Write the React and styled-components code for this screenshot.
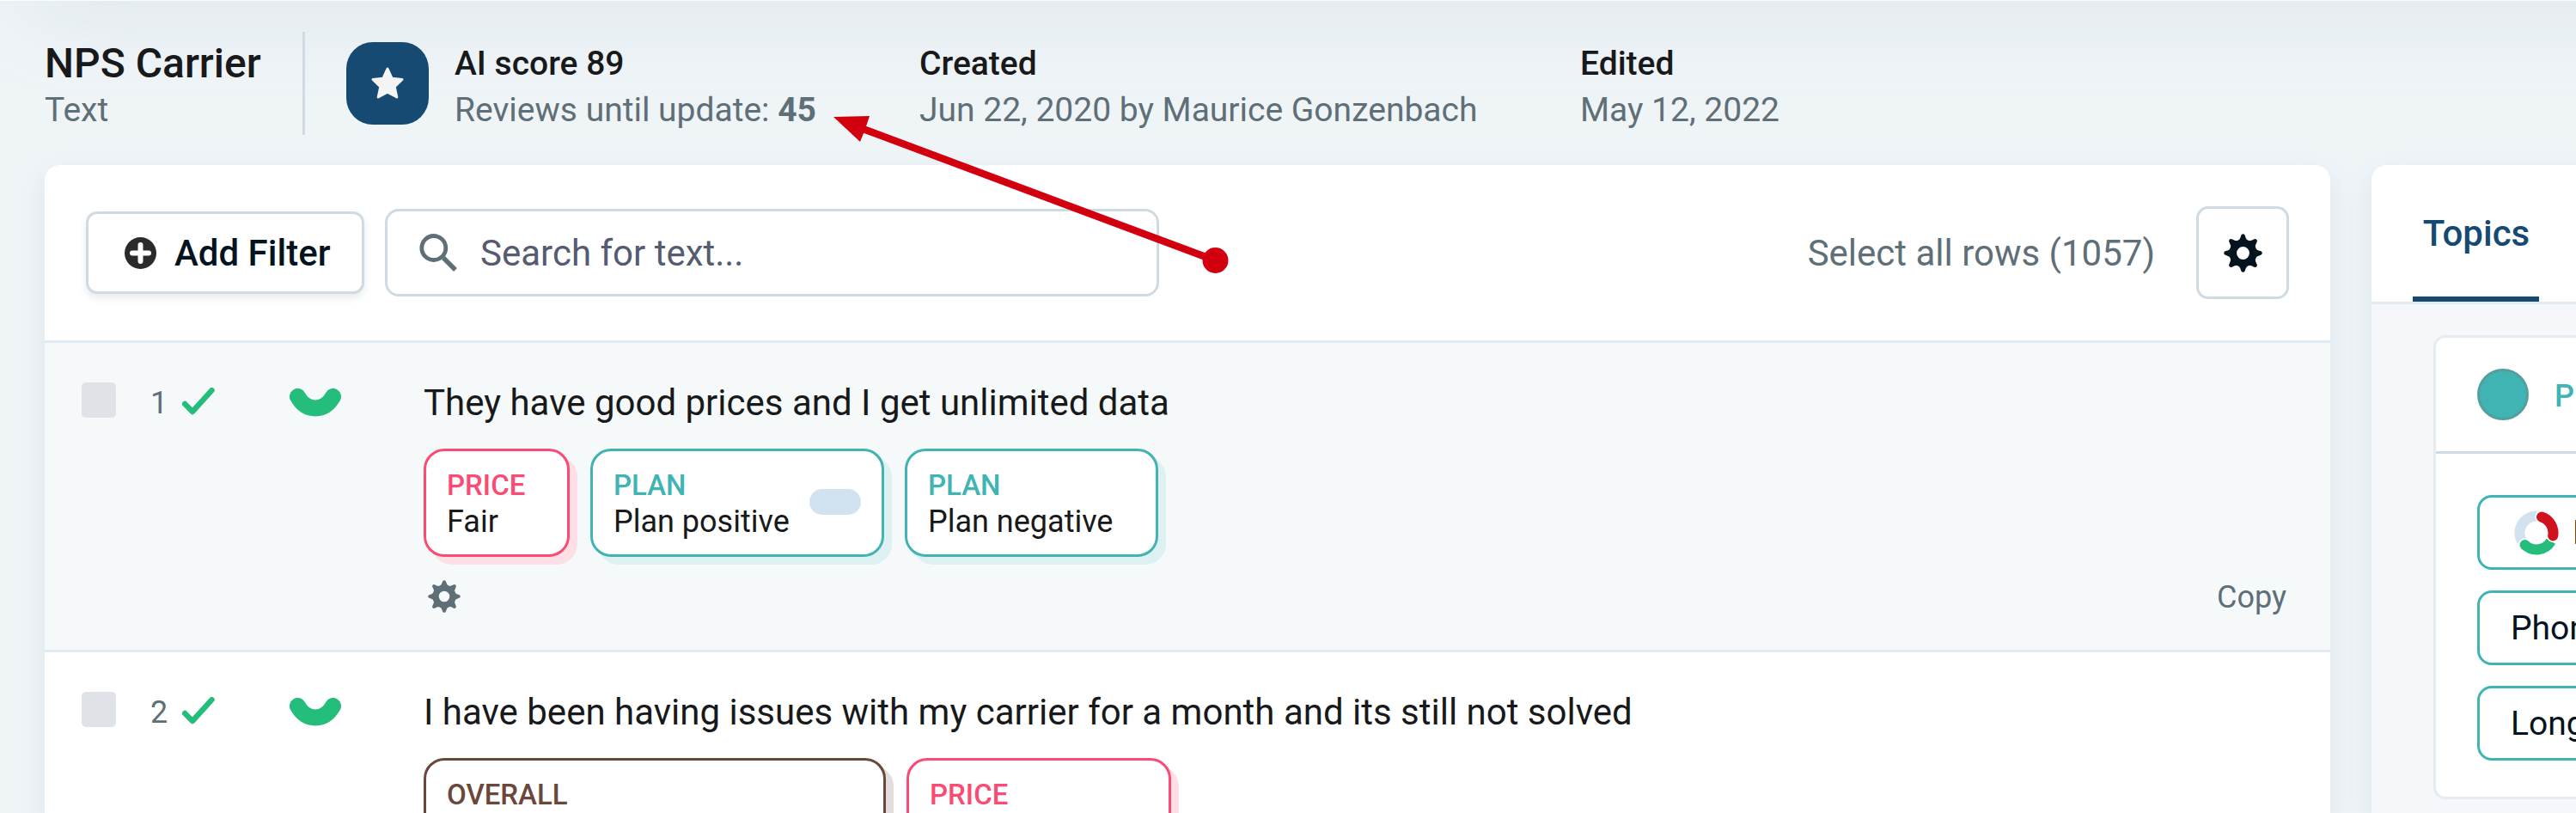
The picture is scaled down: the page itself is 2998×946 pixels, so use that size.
import React from "react";
import styled, { createGlobalStyle } from "styled-components";

const Global = createGlobalStyle`
  * { box-sizing: border-box; }
  body { margin: 0; overflow: hidden; background: #eff4f8; font-family: Roboto, "Liberation Sans", sans-serif; color: #18191b; }
`;

const Page = styled.div`
  position: relative;
  width: 2998px;
  height: 946px;
  overflow: hidden;
  display: flex;
  flex-direction: column;
  border-top: 1px solid #fbfcfd;
  background: #eff4f7;
`;

const TopShade = styled.div`
  position: absolute;
  top: -100px;
  left: 30px;
  right: -300px;
  height: 100px;
  box-shadow: 0 10px 110px rgba(130, 160, 165, 0.17);
`;

const Header = styled.header`
  position: relative;
  height: 191px;
  flex: none;
  display: flex;
  padding: 36px 0 0 52px;
`;

const HeaderBlock = styled.div`
  width: ${(p) => p.$width}px;
  height: 120px;
  padding-top: 11px;
  white-space: nowrap;
`;

const Title = styled.div`
  font-size: 48px;
  line-height: 52px;
  font-weight: 500;
  margin-bottom: 1px;
`;

const Label = styled.div`
  font-size: 39px;
  line-height: 53px;
  font-weight: 500;
`;

const Sub = styled.div`
  font-size: 39px;
  line-height: 54px;
  color: #5f6f78;
  b { font-weight: 700; }
`;

const Divider = styled.div`
  width: 3px;
  height: 120px;
  background: #cfdae2;
  margin-right: 48px;
`;

const ScoreBadge = styled.div`
  width: 96px;
  height: 96px;
  margin: 12px 30px 0 0;
  border-radius: 31px;
  background: #164a72;
  display: flex;
  align-items: center;
  justify-content: center;
`;

const Columns = styled.div`
  position: relative;
  display: flex;
  gap: 48px;
  padding-left: 52px;
  flex: none;
  height: 754px;
`;

const Panel = styled.section`
  width: ${(p) => p.$width}px;
  flex: none;
  border-radius: 18px 18px 0 0;
  background: ${(p) => p.$bg || "#fff"};
  box-shadow: 0 12px 32px rgba(160, 190, 200, 0.24);
`;

const Toolbar = styled.div`
  height: 207px;
  display: flex;
  align-items: center;
  padding: 0 48px;
  border-bottom: 3px solid #e1ebf4;
`;

const FilterButton = styled.button`
  width: 324px;
  height: 96px;
  display: flex;
  align-items: center;
  padding: 1px 0 0 42px;
  gap: 21px;
  border: 3px solid #cfdbe3;
  border-radius: 13px;
  background: #fff;
  box-shadow: 0 5px 8px rgba(40, 60, 80, 0.1);
  font: 500 42px Roboto, sans-serif;
  color: #04141f;
  white-space: nowrap;
`;

const SearchField = styled.div`
  width: 901px;
  height: 102px;
  margin-left: 24px;
  display: flex;
  align-items: center;
  padding: 1px 0 0 37px;
  gap: 27px;
  border: 3px solid #cfdbe3;
  border-radius: 16px;
  font-size: 42px;
  color: #555b70;
`;

const SelectAll = styled.div`
  margin-left: auto;
  margin-right: 48px;
  padding-top: 1px;
  font-size: 42px;
  color: #5f6f78;
`;

const IconButton = styled.button`
  width: 108px;
  height: 108px;
  display: flex;
  align-items: center;
  justify-content: center;
  border: 3px solid #cfdbe3;
  border-radius: 14px;
  background: #fff;
  padding: 0;
`;

const Row = styled.article`
  height: 360px;
  display: flex;
  border-bottom: 3px solid #e1ebf4;
  background: ${(p) => (p.$active ? "#f5f9fa" : "#fff")};
  padding: 45px 51px 0 43px;
`;

const Checkbox = styled.div`
  width: 40px;
  height: 41px;
  margin-top: 1px;
  border-radius: 5px;
  background: #dfe2e7;
`;

const RowNumber = styled.div`
  width: 77px;
  padding-left: 40px;
  height: 42px;
  line-height: 51px;
  font-size: 36px;
  color: #5f6f78;
`;

const RowCheck = styled.svg`
  width: 38px;
  height: 32px;
  margin-top: 7px;
`;

const Smile = styled.svg`
  width: 60px;
  height: 33px;
  margin: 8px 96px 0 87px;
`;

const RowBody = styled.div`
  flex: 1;
  height: 300px;
`;

const Sentence = styled.p`
  margin: 0;
  height: 78px;
  line-height: 50px;
  font-size: 42px;
  white-space: nowrap;
`;

const Chips = styled.div`
  display: flex;
  gap: 24px;
`;

const Chip = styled.div`
  width: ${(p) => p.$width}px;
  height: 126px;
  display: flex;
  align-items: center;
  justify-content: space-between;
  padding: 0 24px;
  border: 3px solid ${(p) => p.$color};
  border-radius: 24px;
  background: #fff;
  box-shadow: 9px 9px 0 ${(p) => p.$shade};
`;

const ChipText = styled.div`
  padding-top: 2px;
  white-space: nowrap;
  font-size: 36px;
  line-height: 43px;
`;

const ChipTopic = styled.div`
  font-size: 33px;
  font-weight: 500;
  color: ${(p) => p.$color};
`;

const Pill = styled.div`
  width: 60px;
  height: 30px;
  margin-bottom: 2px;
  border-radius: 15px;
  background: #d2e3ef;
`;

const RowFooter = styled.div`
  display: flex;
  justify-content: space-between;
  padding: 27px 0 0 5px;
  color: #5f6f78;
  font-size: 36px;
  line-height: 41px;
`;

const Tabs = styled.div`
  height: 162px;
  padding-left: 48px;
  border-bottom: 3px solid #e1ebf4;
  background: #fff;
  border-radius: 18px 0 0 0;
`;

const Tab = styled.div`
  width: 147px;
  height: 159px;
  padding-left: 1px;
  text-align: center;
  line-height: 160px;
  font-size: 42px;
  font-weight: 500;
  color: #164a72;
  border-bottom: 6px solid #164a72;
`;

const TopicCard = styled.div`
  width: 600px;
  height: 540px;
  margin: 36px 0 0 72px;
  border: 3px solid #e5ecf0;
  border-radius: 14px;
  background: #fff;
`;

const TopicHead = styled.div`
  height: 135px;
  display: flex;
  align-items: center;
  gap: 30px;
  border-bottom: 3px solid #cfdae2;
  padding-left: 48px;
  font-size: 36px;
  font-weight: 500;
  color: #40b3b3;
`;

const TopicName = styled.span`
  padding-top: 3px;
`;

const TopicDot = styled.div`
  width: 60px;
  height: 60px;
  border-radius: 50%;
  border: 3px solid #51a09f;
  background: #40b3b3;
`;

const TopicList = styled.div`
  display: flex;
  flex-direction: column;
  gap: 24px;
  padding: 48px 0 0 48px;
`;

const TopicItem = styled.div`
  height: 87px;
  display: flex;
  align-items: center;
  gap: 16px;
  padding-left: ${(p) => (p.$ring ? 40 : 36)}px;
  border: 3px solid #40b3b3;
  border-radius: 17px;
  font-size: 39px;
  color: #04141f;
`;

const ArrowLayer = styled.svg`
  position: absolute;
  left: 0;
  top: -1px;
  pointer-events: none;
`;

const TEETH = [0, 45, 90, 135, 180, 225, 270, 315];

const Gear = ({ size, color }) => (
  <svg width={size} height={size} viewBox="-23 -23 46 46">
    <circle r="12" fill="none" stroke={color} strokeWidth="8.8" />
    {TEETH.map((angle) => (
      <path
        key={angle}
        transform={`rotate(${angle})`}
        fill={color}
        d="M-6.5 -14.5Q-3.6 -16 -2.5 -20.5Q-2 -22.8 0 -22.8Q2 -22.8 2.5 -20.5Q3.6 -16 6.5 -14.5L0 -11Z"
      />
    ))}
  </svg>
);

const Star = () => (
  <svg width="40" height="40" viewBox="0 0 40 40">
    <path
      d="M20 3 L25.1 14.2 L37 15.4 L28.2 23.8 L30.8 36 L20 30.2 L9.2 36 L11.8 23.8 L3 15.4 L14.9 14.2Z"
      fill="#f4f4f4"
      stroke="#f4f4f4"
      strokeWidth="3"
      strokeLinejoin="round"
    />
  </svg>
);

const PlusCircle = () => (
  <svg width="37" height="37" viewBox="0 0 37 37">
    <circle cx="18.5" cy="18.5" r="18.5" fill="#2b2b2b" />
    <path d="M18.5 9V28M9 18.5H28" stroke="#fff" strokeWidth="6" strokeLinecap="round" />
  </svg>
);

const Magnifier = () => (
  <svg width="44" height="45" viewBox="0 0 44 45">
    <circle cx="16.8" cy="16.5" r="14" fill="none" stroke="#5f6f78" strokeWidth="4.8" />
    <path d="M28 28L42 42" stroke="#5f6f78" strokeWidth="5.4" />
  </svg>
);

const Ring = () => (
  <svg width="52" height="52" viewBox="-26 -26 52 52" fill="none" strokeWidth="12">
    <path d="M0 -19.5A19.5 19.5 0 0 0 -16.9 9.8" stroke="#d2e3ef" />
    <path d="M-12.5 15A19.5 19.5 0 0 0 16.9 9.8" stroke="#fff" strokeWidth="15" />
    <circle cx="-13.5" cy="14" r="7.5" fill="#fff" />
    <path d="M-13.5 14A19.5 19.5 0 0 0 16.9 9.8" stroke="#25bd7c" />
    <circle cx="-13.5" cy="14" r="6" fill="#25bd7c" />
    <path d="M6 -18.5A19.5 19.5 0 0 1 19.2 3.4" stroke="#fff" strokeWidth="15" strokeLinecap="round" />
    <path d="M6 -18.5A19.5 19.5 0 0 1 19.2 3.4" stroke="#d0121f" strokeLinecap="round" />
  </svg>
);

const PINK = { color: "#fa4b75", shade: "#ffdfe6" };
const TEAL = { color: "#40b3b3", shade: "#ddf1f2" };
const BROWN = { color: "#6a473b", shade: "#e3dddb" };

const rows = [
  {
    id: 1,
    active: true,
    text: "They have good prices and I get unlimited data",
    chips: [
      { tone: PINK, topic: "PRICE", label: "Fair", width: 170 },
      { tone: TEAL, topic: "PLAN", label: "Plan positive", width: 342, pill: true },
      { tone: TEAL, topic: "PLAN", label: "Plan negative", width: 295 },
    ],
  },
  {
    id: 2,
    text: "I have been having issues with my carrier for a month and its still not solved",
    chips: [
      { tone: BROWN, topic: "OVERALL", label: "", width: 538 },
      { tone: PINK, topic: "PRICE", label: "", width: 308 },
    ],
  },
];

export default function App() {
  return (
    <Page>
      <Global />
      <TopShade />
      <Header>
        <HeaderBlock $width={300}>
          <Title>NPS Carrier</Title>
          <Sub>Text</Sub>
        </HeaderBlock>
        <Divider />
        <ScoreBadge><Star /></ScoreBadge>
        <HeaderBlock $width={541}>
          <Label>AI score 89</Label>
          <Sub>Reviews until update: <b>45</b></Sub>
        </HeaderBlock>
        <HeaderBlock $width={769}>
          <Label>Created</Label>
          <Sub>Jun 22, 2020 by Maurice Gonzenbach</Sub>
        </HeaderBlock>
        <HeaderBlock $width={300}>
          <Label>Edited</Label>
          <Sub>May 12, 2022</Sub>
        </HeaderBlock>
      </Header>
      <Columns>
        <Panel $width={2660}>
          <Toolbar>
            <FilterButton><PlusCircle />Add Filter</FilterButton>
            <SearchField><Magnifier />Search for text...</SearchField>
            <SelectAll>Select all rows (1057)</SelectAll>
            <IconButton><Gear size={45} color="#04141f" /></IconButton>
          </Toolbar>
          {rows.map((row) => (
            <Row key={row.id} $active={row.active}>
              <Checkbox />
              <RowNumber>{row.id}</RowNumber>
              <RowCheck viewBox="0 0 38 32">
                <path d="M3.2 19L12 28L34.5 3.2" fill="none" stroke="#25bd7c" strokeWidth="6.4" strokeLinecap="round" strokeLinejoin="round" />
              </RowCheck>
              <Smile viewBox="0 0 60 33">
                <path d="M9.5 9.5Q17 23 30 23T50.5 9.5" fill="none" stroke="#25bd7c" strokeWidth="19" strokeLinecap="round" />
              </Smile>
              <RowBody>
                <Sentence>{row.text}</Sentence>
                <Chips>
                  {row.chips.map((chip, i) => (
                    <Chip key={i} $width={chip.width} $color={chip.tone.color} $shade={chip.tone.shade}>
                      <ChipText>
                        <ChipTopic $color={chip.tone.color}>{chip.topic}</ChipTopic>
                        {chip.label || "\u00a0"}
                      </ChipText>
                      {chip.pill && <Pill />}
                    </Chip>
                  ))}
                </Chips>
                {row.active && (
                  <RowFooter>
                    <Gear size={38} color="#5f6f78" />
                    <span>Copy</span>
                  </RowFooter>
                )}
              </RowBody>
            </Row>
          ))}
        </Panel>
        <Panel $width={700} $bg="#f5f7fb">
          <Tabs><Tab>Topics</Tab></Tabs>
          <TopicCard>
            <TopicHead><TopicDot /><TopicName>PLAN</TopicName></TopicHead>
            <TopicList>
              <TopicItem $ring><Ring />Plan</TopicItem>
              <TopicItem>Phone</TopicItem>
              <TopicItem>Long</TopicItem>
            </TopicList>
          </TopicCard>
        </Panel>
      </Columns>
      <ArrowLayer width="1500" height="400" viewBox="0 0 1500 400">
        <path d="M1003 149.5L1414 303" stroke="#d2000f" strokeWidth="8.4" />
        <path d="M970 136L1012 135L1007 150L1001 165Z" fill="#d2000f" />
        <circle cx="1414.5" cy="303" r="15" fill="#d2000f" />
      </ArrowLayer>
    </Page>
  );
}
